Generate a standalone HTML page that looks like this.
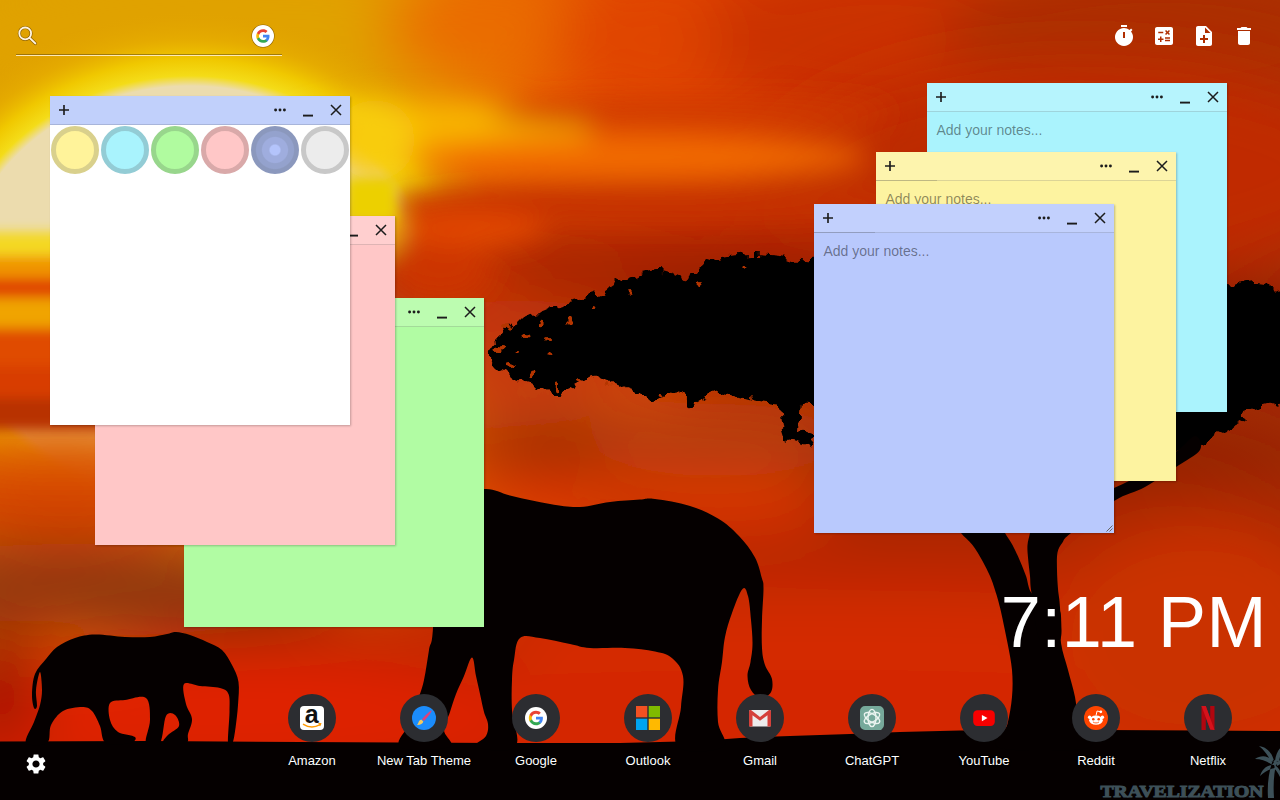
<!DOCTYPE html>
<html>
<head>
<meta charset="utf-8">
<title>New Tab</title>
<style>
*{box-sizing:border-box;margin:0;padding:0}
html,body{width:1280px;height:800px;overflow:hidden;background:#000;font-family:"Liberation Sans",sans-serif}
#bg{position:absolute;left:0;top:0;width:1280px;height:800px;display:block}
.abs{position:absolute}
/* search */
#search{position:absolute;left:16px;top:16px;width:266px;height:40px;border-bottom:1px solid rgba(255,236,190,.95);box-shadow:0 -1px 0 rgba(90,70,20,.5) inset}
/* toolbar */
.tb{position:absolute;top:24px;width:24px;height:24px;fill:#fff}
/* notes */
.note{position:absolute;width:300px;height:329px;box-shadow:1px 1px 2px rgba(0,0,0,.24)}
.note .hd{position:absolute;left:0;top:0;right:0;height:29px;border-bottom:1px solid rgba(0,0,0,.13);background:rgba(255,255,255,.14)}
.note .ttl{position:absolute;left:0;top:28px;width:61px;height:1px;background:rgba(0,0,0,.13)}
.note svg.ic{position:absolute;left:0;top:0;width:300px;height:28px}
.note .ph{position:absolute;left:9.5px;top:39px;font-size:14px;line-height:16px;color:rgba(0,0,0,.45);white-space:nowrap}
.sw{position:absolute;top:30px;width:48px;height:48px;border-radius:50%;border:5px solid #000}
/* dock */
.tile{position:absolute;top:694px;width:48px;height:48px;border-radius:50%;background:#2c2d31}
.tile svg{position:absolute;left:12px;top:12px;width:24px;height:24px}
.lbl{position:absolute;top:753px;width:112px;text-align:center;color:#fff;font-size:13px;line-height:16px;text-shadow:0 0 2px rgba(0,0,0,.9),0 1px 2px rgba(0,0,0,.8)}
#clock{position:absolute;right:13px;top:581.5px;color:#fff;font-size:72px;letter-spacing:.5px;line-height:80px;white-space:nowrap}
</style>
</head>
<body>
<svg id="bg" viewBox="0 0 1280 800">
<defs>
<linearGradient id="gTop" x1="0" x2="1" y1="0" y2="0">
<stop offset="0" stop-color="#dea000"/><stop offset=".2" stop-color="#e4a200"/><stop offset=".32" stop-color="#ea8600"/><stop offset=".42" stop-color="#e65c00"/><stop offset=".55" stop-color="#dc3c00"/><stop offset=".7" stop-color="#c83000"/><stop offset="1" stop-color="#a82c06"/>
</linearGradient>
<filter id="b30" x="-20%" y="-20%" width="140%" height="140%"><feGaussianBlur stdDeviation="30"/></filter>
<filter id="b14" x="-20%" y="-20%" width="140%" height="140%"><feGaussianBlur stdDeviation="14"/></filter>
<filter id="b6" x="-20%" y="-20%" width="140%" height="140%"><feGaussianBlur stdDeviation="6"/></filter>
<filter id="rough" x="-5%" y="-10%" width="110%" height="120%"><feTurbulence type="fractalNoise" baseFrequency="0.09" numOctaves="2" seed="4" result="n"/><feDisplacementMap in="SourceGraphic" in2="n" scale="16" xChannelSelector="R" yChannelSelector="G"/></filter>
<radialGradient id="gSun" gradientUnits="userSpaceOnUse" cx="190" cy="290" r="340" gradientTransform="translate(190 0) scale(1.13 1) translate(-190 0)"><stop offset="0" stop-color="#ecdcae"/><stop offset=".6" stop-color="#ecdcae"/><stop offset=".63" stop-color="#f4dc18"/><stop offset=".68" stop-color="#f0c800"/><stop offset=".74" stop-color="#e8b000" stop-opacity=".6"/><stop offset=".83" stop-color="#e0a000" stop-opacity="0"/></radialGradient>
</defs>
<rect width="1280" height="800" fill="url(#gTop)"/>
<!--BGPATCHES--><g filter="url(#b30)">
<ellipse cx="250" cy="40" rx="330" ry="80" fill="#e0a200"/>
<ellipse cx="500" cy="30" rx="120" ry="60" fill="#ea6c00"/>
<ellipse cx="680" cy="40" rx="130" ry="70" fill="#e04400"/>
<ellipse cx="880" cy="40" rx="180" ry="80" fill="#ca3200"/>
<ellipse cx="1160" cy="40" rx="220" ry="80" fill="#ac2e06"/>
</g>
<ellipse cx="190" cy="290" rx="390" ry="340" fill="url(#gSun)"/>
<g filter="url(#b30)">
<ellipse cx="640" cy="740" rx="1000" ry="110" fill="#d42200"/>
<ellipse cx="1080" cy="170" rx="300" ry="110" fill="#c02c00"/>
<ellipse cx="640" cy="250" rx="320" ry="45" fill="#b02200"/>
<ellipse cx="520" cy="250" rx="150" ry="34" fill="#c23000"/>
<ellipse cx="700" cy="300" rx="420" ry="40" fill="#9c2000"/>
<ellipse cx="580" cy="275" rx="300" ry="35" fill="#a42000"/>
<ellipse cx="900" cy="190" rx="160" ry="60" fill="#bc2a00"/>
<ellipse cx="1000" cy="330" rx="400" ry="60" fill="#8c1c00"/>
<ellipse cx="450" cy="300" rx="70" ry="60" fill="#c43000"/>
<ellipse cx="520" cy="350" rx="130" ry="50" fill="#c43808"/>
<ellipse cx="600" cy="435" rx="200" ry="35" fill="#cc4810"/>
<ellipse cx="900" cy="450" rx="450" ry="40" fill="#902400"/>
<ellipse cx="640" cy="500" rx="260" ry="30" fill="#e03a00"/>
<ellipse cx="1000" cy="520" rx="400" ry="40" fill="#a82600"/>
<ellipse cx="720" cy="440" rx="130" ry="36" fill="#b03c0c"/>
<ellipse cx="730" cy="506" rx="110" ry="20" fill="#e23400"/>
<ellipse cx="800" cy="570" rx="600" ry="30" fill="#b82800"/>
<ellipse cx="800" cy="640" rx="600" ry="50" fill="#d42a00"/>
<ellipse cx="800" cy="720" rx="600" ry="50" fill="#d42600"/>
<ellipse cx="1200" cy="640" rx="150" ry="120" fill="#ca3200"/>
<ellipse cx="60" cy="438" rx="160" ry="22" fill="#e47000"/>
<ellipse cx="60" cy="500" rx="200" ry="42" fill="#d44000"/>
<ellipse cx="80" cy="590" rx="270" ry="46" fill="#8e3610"/>
<ellipse cx="330" cy="650" rx="200" ry="25" fill="#b02800"/>
<ellipse cx="25" cy="630" rx="60" ry="10" fill="#c84000"/>
<ellipse cx="200" cy="700" rx="320" ry="50" fill="#e02400"/>
<ellipse cx="0" cy="690" rx="40" ry="60" fill="#a01800"/>
</g>
<g filter="url(#b14)">
<ellipse cx="440" cy="135" rx="150" ry="34" fill="#f8b400"/>
<ellipse cx="375" cy="140" rx="40" ry="40" fill="#f8cc10"/>
<ellipse cx="690" cy="114" rx="200" ry="14" fill="#d03a00"/>
<ellipse cx="640" cy="157" rx="230" ry="21" fill="#f26c00"/>
<ellipse cx="660" cy="204" rx="290" ry="20" fill="#c63200"/>
<ellipse cx="440" cy="270" rx="50" ry="30" fill="#cc3400"/>
<ellipse cx="378" cy="226" rx="20" ry="28" fill="#f4c810"/>
<ellipse cx="470" cy="228" rx="75" ry="17" fill="#e24600"/>
</g><g filter="url(#b6)">
<rect x="346" y="178" width="50" height="44" fill="#ecd000"/>
<rect x="-40" y="232" width="130" height="24" fill="#f4d820"/>
<rect x="-40" y="256" width="140" height="22" fill="#f09400"/>
<rect x="-40" y="278" width="140" height="20" fill="#e04400"/>
<rect x="-40" y="298" width="150" height="30" fill="#f0a400"/>
<rect x="-40" y="328" width="160" height="40" fill="#e04c00"/>
<rect x="-40" y="366" width="170" height="34" fill="#d83c00"/>
<rect x="-40" y="398" width="180" height="32" fill="#b83200"/>
</g><!--/BGPATCHES-->
<!--SILHOUETTES-->
<path fill="#050000" d="M0 741.5L150 741L300 742L500 743L620 743L700 741L740 738L790 736L850 734L900 732L960 730.5L1100 730L1200 730.5L1280 731V800H0Z"/>
<g filter="url(#rough)"><path fill="#050000" d="M490.0 350.0C491.7 346.3 495.7 343.0 500.0 338.0C504.3 333.0 509.3 324.3 516.0 320.0C522.7 315.7 532.7 314.7 540.0 312.0C547.3 309.3 552.5 306.3 560.0 304.0C567.5 301.7 578.3 299.7 585.0 298.0C591.7 296.3 595.5 296.0 600.0 294.0C604.5 292.0 608.0 288.3 612.0 286.0C616.0 283.7 619.3 282.0 624.0 280.0C628.7 278.0 634.0 275.7 640.0 274.0C646.0 272.3 654.2 270.0 660.0 270.0C665.8 270.0 670.3 272.7 675.0 274.0C679.7 275.3 683.8 279.0 688.0 278.0C692.2 277.0 696.0 271.0 700.0 268.0C704.0 265.0 707.0 262.0 712.0 260.0C717.0 258.0 723.3 257.0 730.0 256.0C736.7 255.0 743.7 254.0 752.0 254.0C760.3 254.0 770.0 255.0 780.0 256.0C790.0 257.0 798.7 261.0 812.0 260.0C825.3 259.0 842.0 252.7 860.0 250.0C878.0 247.3 896.7 245.7 920.0 244.0C943.3 242.3 970.0 239.0 1000.0 240.0C1030.0 241.0 1070.0 245.3 1100.0 250.0C1130.0 254.7 1158.7 262.2 1180.0 268.0C1201.3 273.8 1218.0 282.7 1228.0 285.0C1238.0 287.3 1235.7 282.8 1240.0 282.0C1244.3 281.2 1249.3 279.5 1254.0 280.0C1258.7 280.5 1262.8 280.8 1268.0 285.0C1273.2 289.2 1282.2 286.2 1285.0 305.0C1287.8 323.8 1287.8 381.5 1285.0 398.0C1282.2 414.5 1273.2 402.3 1268.0 404.0C1262.8 405.7 1258.3 406.7 1254.0 408.0C1249.7 409.3 1243.2 410.3 1242.0 412.0C1240.8 413.7 1248.0 415.8 1247.0 418.0C1246.0 420.2 1240.2 422.7 1236.0 425.0C1231.8 427.3 1227.2 429.2 1222.0 432.0C1216.8 434.8 1210.3 439.0 1205.0 442.0C1199.7 445.0 1194.7 448.3 1190.0 450.0C1185.3 451.7 1180.3 453.7 1177.0 452.0C1173.7 450.3 1174.5 443.7 1170.0 440.0C1165.5 436.3 1161.7 433.3 1150.0 430.0C1138.3 426.7 1125.0 423.3 1100.0 420.0C1075.0 416.7 1033.3 412.0 1000.0 410.0C966.7 408.0 931.3 409.0 900.0 408.0C868.7 407.0 829.3 404.7 812.0 404.0C794.7 403.3 802.7 404.0 796.0 404.0C789.3 404.0 780.5 405.0 772.0 404.0C763.5 403.0 753.7 400.0 745.0 398.0C736.3 396.0 727.5 391.7 720.0 392.0C712.5 392.3 705.3 397.7 700.0 400.0C694.7 402.3 691.3 407.3 688.0 406.0C684.7 404.7 683.8 393.7 680.0 392.0C676.2 390.3 669.7 394.3 665.0 396.0C660.3 397.7 656.2 402.3 652.0 402.0C647.8 401.7 644.7 396.3 640.0 394.0C635.3 391.7 629.8 390.3 624.0 388.0C618.2 385.7 610.3 382.0 605.0 380.0C599.7 378.0 597.0 375.0 592.0 376.0C587.0 377.0 581.0 383.2 575.0 386.0C569.0 388.8 561.8 392.8 556.0 393.0C550.2 393.2 546.0 389.0 540.0 387.0C534.0 385.0 525.8 383.0 520.0 381.0C514.2 379.0 508.8 376.7 505.0 375.0C501.2 373.3 499.5 373.5 497.0 371.0C494.5 368.5 491.2 363.5 490.0 360.0C488.8 356.5 488.3 353.7 490.0 350.0Z"/>
<path fill="#050000" d="M780 400L786 440L812 446L816 436L798 430L800 400Z"/><ellipse cx="507" cy="329" rx="4" ry="3" fill="#b43606"/><ellipse cx="525" cy="338" rx="3.5" ry="3" fill="#b43606"/><ellipse cx="540" cy="320" rx="3" ry="2.5" fill="#b43606"/><ellipse cx="510" cy="365" rx="4" ry="3" fill="#b43606"/><ellipse cx="531" cy="374" rx="3.5" ry="2.5" fill="#b43606"/><ellipse cx="558" cy="386" rx="3" ry="2.5" fill="#b43606"/><ellipse cx="579" cy="380" rx="3" ry="2" fill="#b43606"/><ellipse cx="570" cy="320" rx="3" ry="2.5" fill="#b43606"/><ellipse cx="594" cy="308" rx="2.5" ry="2" fill="#b43606"/><ellipse cx="609" cy="386" rx="2.5" ry="2" fill="#b43606"/><ellipse cx="552" cy="356" rx="2.5" ry="2" fill="#b43606"/><ellipse cx="498" cy="350" rx="3.5" ry="3" fill="#b43606"/><ellipse cx="518" cy="352" rx="2.5" ry="2" fill="#b43606"/><ellipse cx="545" cy="340" rx="2" ry="2" fill="#b43606"/><ellipse cx="630" cy="294" rx="2.5" ry="2" fill="#b43606"/><ellipse cx="660" cy="396" rx="2.5" ry="2" fill="#b43606"/><ellipse cx="700" cy="284" rx="2.5" ry="2" fill="#b43606"/><ellipse cx="745" cy="268" rx="2.5" ry="2" fill="#b43606"/></g>
<path fill="#050000" d="M940.0 420.0C933.0 433.3 945.7 483.3 948.0 500.0C950.3 516.7 951.8 514.5 954.0 520.0C956.2 525.5 957.9 528.8 961.0 533.0C964.1 537.2 968.9 540.3 972.5 545.0C976.1 549.7 979.6 555.8 982.5 561.0C985.4 566.2 987.9 571.2 990.0 576.0C992.1 580.8 993.3 584.8 995.0 590.0C996.7 595.2 997.9 598.7 1000.0 607.5C1002.1 616.3 1005.5 632.6 1007.5 643.0C1009.5 653.4 1011.2 661.0 1012.0 670.0C1012.8 679.0 1012.8 688.0 1012.0 697.0C1011.2 706.0 1009.5 715.5 1007.5 724.0C1005.5 732.5 986.6 744.0 1000.0 748.0C1013.4 752.0 1074.8 752.0 1088.0 748.0C1101.2 744.0 1081.2 732.5 1079.0 724.0C1076.8 715.5 1076.8 706.0 1075.0 697.0C1073.2 688.0 1070.3 679.0 1068.0 670.0C1065.7 661.0 1062.3 652.8 1061.0 643.0C1059.7 633.2 1062.7 618.2 1060.0 611.0C1057.3 603.8 1049.8 603.0 1045.0 600.0C1040.2 597.0 1034.7 597.0 1031.5 593.0C1028.3 589.0 1027.9 581.3 1026.0 576.0C1024.1 570.7 1022.2 566.2 1020.0 561.0C1017.8 555.8 1015.0 549.7 1012.5 545.0C1010.0 540.3 1007.2 537.2 1005.0 533.0C1002.8 528.8 1000.8 525.5 999.0 520.0C997.2 514.5 995.5 516.7 994.0 500.0C992.5 483.3 999.0 433.3 990.0 420.0C981.0 406.7 947.0 406.7 940.0 420.0Z"/>
<path fill="#050000" d="M1036.0 500.0C1028.8 503.3 1033.0 514.5 1032.0 520.0C1031.0 525.5 1030.8 528.8 1030.0 533.0C1029.2 537.2 1027.8 540.9 1027.5 545.0C1027.2 549.1 1027.6 552.3 1028.0 557.5C1028.4 562.7 1029.4 570.1 1030.0 576.0C1030.6 581.9 1029.8 582.3 1031.5 593.0C1033.2 603.7 1035.2 632.2 1040.0 640.0C1044.8 647.8 1056.7 645.4 1060.0 640.0C1063.3 634.6 1060.3 616.0 1060.0 607.5C1059.7 599.0 1058.5 595.2 1058.0 589.0C1057.5 582.8 1057.1 576.1 1057.0 570.0C1056.9 563.9 1056.6 557.1 1057.5 552.5C1058.4 547.9 1060.2 545.8 1062.5 542.5C1064.8 539.2 1062.4 539.9 1071.0 533.0C1079.6 526.1 1101.7 508.7 1114.0 501.0C1126.3 493.3 1134.7 492.7 1145.0 487.0C1155.3 481.3 1166.8 473.2 1176.0 467.0C1185.2 460.8 1196.8 455.2 1200.0 450.0C1203.2 444.8 1199.0 435.7 1195.0 436.0C1191.0 436.3 1184.3 446.0 1176.0 452.0C1167.7 458.0 1155.3 466.0 1145.0 472.0C1134.7 478.0 1125.7 483.3 1114.0 488.0C1102.3 492.7 1088.0 498.0 1075.0 500.0C1062.0 502.0 1043.2 496.7 1036.0 500.0Z"/>
<path fill="#050000" d="M484.0 489.0C495.4 488.3 499.9 493.2 512.0 496.0C524.1 498.8 537.5 502.0 550.0 504.0C562.5 506.0 569.0 507.4 580.0 507.0C591.0 506.6 599.0 503.4 610.0 502.0C621.0 500.6 631.8 500.1 640.0 499.5C648.2 498.9 645.8 497.8 655.0 499.0C664.2 500.2 678.5 502.4 690.0 506.0C701.5 509.6 709.0 513.0 718.0 518.5C727.0 524.0 732.3 528.9 739.0 536.0C745.7 543.1 750.5 549.3 754.7 557.0C758.9 564.7 760.2 572.2 761.8 578.0C763.4 583.8 763.5 580.8 763.5 588.5C763.5 596.2 762.3 609.1 762.0 620.0C761.7 630.9 761.5 639.8 762.0 648.0C762.5 656.2 763.2 659.3 765.0 665.0C766.8 670.7 771.0 673.9 772.0 679.0C773.0 684.1 772.7 689.6 770.5 693.0C768.3 696.4 763.6 698.0 760.0 697.5C756.4 697.0 753.3 693.9 751.0 690.0C748.7 686.1 747.6 681.1 747.5 676.0C747.4 670.9 749.6 667.9 750.5 662.0C751.4 656.1 752.4 651.7 752.5 644.0C752.6 636.3 751.8 628.8 751.0 620.0C750.2 611.2 749.6 601.7 748.0 596.0C746.4 590.3 745.4 585.9 742.5 589.0C739.6 592.1 735.2 604.2 732.0 613.0C728.8 621.8 726.8 628.0 725.0 637.0C723.2 646.0 723.3 652.3 722.0 662.0C720.7 671.7 718.7 679.0 718.0 690.0C717.3 701.0 717.1 711.5 718.0 722.0C718.9 732.5 730.3 742.4 723.0 747.0C715.7 751.6 685.7 754.3 678.0 747.0C670.3 739.7 680.1 720.0 681.0 707.0C681.9 694.0 684.6 684.9 683.0 676.0C681.4 667.1 677.6 663.0 672.5 658.5C667.4 654.0 663.7 653.4 655.0 651.5C646.3 649.6 636.9 648.6 625.0 648.0C613.1 647.4 600.1 648.7 590.0 648.0C579.9 647.3 579.2 645.8 570.0 644.0C560.8 642.2 549.2 639.1 540.0 638.0C530.8 636.9 524.8 634.0 520.0 638.0C515.2 642.0 515.5 652.3 514.0 660.0C512.5 667.7 512.4 670.8 512.0 680.0C511.6 689.2 511.4 697.7 512.0 710.0C512.5 722.3 521.6 740.2 515.0 747.0C508.4 753.8 481.3 749.0 476.0 747.0C470.7 745.0 483.8 740.2 486.0 736.0C488.2 731.8 488.4 728.4 488.0 724.0C487.6 719.6 485.5 717.5 484.0 712.0C482.5 706.5 481.5 700.6 480.0 694.0C478.5 687.4 477.5 682.7 476.0 676.0C474.5 669.3 474.2 657.5 472.0 657.5C469.8 657.5 466.9 669.3 464.0 676.0C461.1 682.7 458.6 687.4 456.0 694.0C453.4 700.6 452.2 705.4 450.0 712.0C447.8 718.6 444.2 723.6 444.0 730.0C443.8 736.4 457.1 743.9 449.0 747.0C440.9 750.1 406.8 752.0 400.0 747.0C393.2 742.0 408.7 728.6 412.0 720.0C415.3 711.4 415.8 707.3 418.0 700.0C420.2 692.7 422.0 689.2 424.0 680.0C426.0 670.8 427.4 659.5 429.0 650.0C430.6 640.5 431.7 648.2 433.0 628.0C434.3 607.8 432.9 563.5 436.0 540.0C439.1 516.5 441.2 509.4 450.0 500.0C458.8 490.6 472.6 489.7 484.0 489.0Z"/>
<path fill="#050000" d="M46.0 659.0C49.7 654.5 52.2 650.5 57.0 647.0C61.8 643.5 68.7 640.1 75.0 638.0C81.3 635.9 86.7 634.7 95.0 634.5C103.3 634.3 115.8 636.6 125.0 637.0C134.2 637.4 143.0 637.5 150.0 637.0C157.0 636.5 162.7 634.8 167.0 634.0C171.3 633.2 172.2 631.8 176.0 632.0C179.8 632.2 184.8 633.3 190.0 635.0C195.2 636.7 201.7 639.5 207.0 642.0C212.3 644.5 217.8 646.2 222.0 650.0C226.2 653.8 229.2 659.7 232.0 665.0C234.8 670.3 237.5 675.3 238.5 682.0C239.5 688.7 238.5 697.3 238.0 705.0C237.5 712.7 236.4 721.7 235.5 728.0C234.6 734.3 233.8 740.5 232.5 743.0C231.2 745.5 228.5 748.2 228.0 743.0C227.5 737.8 229.4 720.2 229.5 712.0C229.6 703.8 230.1 698.0 228.5 694.0C226.9 690.0 224.8 689.3 220.0 688.0C215.2 686.7 206.0 686.7 200.0 686.0C194.0 685.3 186.3 681.0 184.0 684.0C181.7 687.0 184.7 698.2 186.0 704.0C187.3 709.8 191.7 714.0 192.0 719.0C192.3 724.0 189.0 730.0 188.0 734.0C187.0 738.0 190.0 741.5 186.0 743.0C182.0 744.5 167.0 744.3 164.0 743.0C161.0 741.7 165.5 737.8 168.0 735.0C170.5 732.2 177.8 729.3 179.0 726.0C180.2 722.7 177.2 716.7 175.0 715.0C172.8 713.3 168.5 711.3 166.0 716.0C163.5 720.7 163.3 738.5 160.0 743.0C156.7 747.5 147.7 746.8 146.0 743.0C144.3 739.2 150.0 727.5 150.0 720.0C150.0 712.5 150.2 701.3 146.0 698.0C141.8 694.7 131.0 699.2 125.0 700.0C119.0 700.8 112.5 699.7 110.0 703.0C107.5 706.3 108.7 715.2 110.0 720.0C111.3 724.8 113.8 729.2 118.0 732.0C122.2 734.8 133.0 735.2 135.0 737.0C137.0 738.8 134.8 742.0 130.0 743.0C125.2 744.0 111.0 745.8 106.0 743.0C101.0 740.2 102.3 731.3 100.0 726.0C97.7 720.7 95.0 714.2 92.0 711.0C89.0 707.8 86.8 707.0 82.0 707.0C77.2 707.0 68.2 708.0 63.0 711.0C57.8 714.0 53.7 719.7 51.0 725.0C48.3 730.3 51.2 740.0 47.0 743.0C42.8 746.0 28.2 746.5 26.0 743.0C23.8 739.5 31.7 728.3 34.0 722.0C36.3 715.7 38.7 710.3 40.0 705.0C41.3 699.7 42.0 695.5 42.0 690.0C42.0 684.5 41.0 672.0 40.0 672.0C39.0 672.0 36.5 684.3 36.0 690.0C35.5 695.7 37.3 703.0 37.0 706.0C36.7 709.0 34.8 710.0 34.0 708.0C33.2 706.0 31.8 699.7 32.0 694.0C32.2 688.3 32.7 679.8 35.0 674.0C37.3 668.2 42.3 663.5 46.0 659.0Z"/>
<g fill="#3d5058"><text x="1100.5" y="797" font-family="Liberation Serif" font-weight="bold" font-size="17.5" textLength="163" lengthAdjust="spacingAndGlyphs" stroke="#3d5058" stroke-width="1.1">TRAVELIZATION</text><path d="M1268 798c-1-14 1-28 5-38l4 1c-3 10-4 23-3 37zM1274 762c-6-7-13-7-19-3 6 0 12 2 17 6zM1274 761c-2-9-8-14-15-15 5 4 9 9 12 16zM1275 761c1-8 4-13 9-16-2 5-4 10-5 17zM1276 763c4-4 8-4 12-2-4 1-8 3-11 5zM1274 765c-8 0-12 5-14 11 4-4 9-7 15-8zM1276 766c4 3 6 8 5 13-2-4-4-8-7-11z"/></g>
<!--/SILHOUETTES-->
</svg>
<!--UI-->
<div class="note" style="left:184px;top:298px;background:#b1fca3"><div class="hd"></div><div class="ttl"></div><svg class="ic" viewBox="0 0 300 28"><g stroke="#1c1c1c" fill="none"><path d="M9 14H19M14 9V19" stroke-width="1.65"/><path d="M253 19.6H263" stroke-width="1.9"/><path d="M281 9L291 19M291 9L281 19" stroke-width="1.5"/></g><g fill="#1c1c1c"><circle cx="225.6" cy="14" r="1.45"/><circle cx="230" cy="14" r="1.45"/><circle cx="234.4" cy="14" r="1.45"/></g></svg></div>
<div class="note" style="left:95px;top:216px;background:#ffc7c7"><div class="hd"></div><div class="ttl"></div><svg class="ic" viewBox="0 0 300 28"><g stroke="#1c1c1c" fill="none"><path d="M9 14H19M14 9V19" stroke-width="1.65"/><path d="M253 19.6H263" stroke-width="1.9"/><path d="M281 9L291 19M291 9L281 19" stroke-width="1.5"/></g><g fill="#1c1c1c"><circle cx="225.6" cy="14" r="1.45"/><circle cx="230" cy="14" r="1.45"/><circle cx="234.4" cy="14" r="1.45"/></g></svg></div>
<div class="note" style="left:50px;top:96px;background:#ffffff"><div class="hd" style=background:#c1d0fb></div><svg class="ic" viewBox="0 0 300 28"><g stroke="#1c1c1c" fill="none"><path d="M9 14H19M14 9V19" stroke-width="1.65"/><path d="M253 19.6H263" stroke-width="1.9"/><path d="M281 9L291 19M291 9L281 19" stroke-width="1.5"/></g><g fill="#1c1c1c"><circle cx="225.6" cy="14" r="1.45"/><circle cx="230" cy="14" r="1.45"/><circle cx="234.4" cy="14" r="1.45"/></g></svg><div class="sw" style="left:1px;background:#fff39a;border-color:#d9d08c"></div><div class="sw" style="left:51px;background:#a9f3fd;border-color:#93ccd5"></div><div class="sw" style="left:101px;background:#b0fb9f;border-color:#98d68c"></div><div class="sw" style="left:151px;background:#ffc7c7;border-color:#d9a9a9"></div><div class="sw" style="left:201px;border:none;background:radial-gradient(circle closest-side,#b4c4fb 0,#b4c4fb 20%,#9fadde 26%,#9fadde 52%,#94a2cd 57%,#94a2cd 77%,#8b98bd 82%,#8b98bd 100%)"></div><div class="sw" style="left:251px;background:#ececec;border-color:#c8c8c8"></div></div>
<div class="note" style="left:927px;top:83px;background:#aaf3fd"><div class="hd"></div><svg class="ic" viewBox="0 0 300 28"><g stroke="#1c1c1c" fill="none"><path d="M9 14H19M14 9V19" stroke-width="1.65"/><path d="M253 19.6H263" stroke-width="1.9"/><path d="M281 9L291 19M291 9L281 19" stroke-width="1.5"/></g><g fill="#1c1c1c"><circle cx="225.6" cy="14" r="1.45"/><circle cx="230" cy="14" r="1.45"/><circle cx="234.4" cy="14" r="1.45"/></g></svg><div class="ph">Add your notes...</div></div>
<div class="note" style="left:876px;top:152px;background:#fdf3a0"><div class="hd"></div><div class="ttl"></div><svg class="ic" viewBox="0 0 300 28"><g stroke="#1c1c1c" fill="none"><path d="M9 14H19M14 9V19" stroke-width="1.65"/><path d="M253 19.6H263" stroke-width="1.9"/><path d="M281 9L291 19M291 9L281 19" stroke-width="1.5"/></g><g fill="#1c1c1c"><circle cx="225.6" cy="14" r="1.45"/><circle cx="230" cy="14" r="1.45"/><circle cx="234.4" cy="14" r="1.45"/></g></svg><div class="ph">Add your notes...</div></div>
<div class="note" style="left:814px;top:204px;background:#b9c9fd"><div class="hd"></div><div class="ttl"></div><svg class="ic" viewBox="0 0 300 28"><g stroke="#1c1c1c" fill="none"><path d="M9 14H19M14 9V19" stroke-width="1.65"/><path d="M253 19.6H263" stroke-width="1.9"/><path d="M281 9L291 19M291 9L281 19" stroke-width="1.5"/></g><g fill="#1c1c1c"><circle cx="225.6" cy="14" r="1.45"/><circle cx="230" cy="14" r="1.45"/><circle cx="234.4" cy="14" r="1.45"/></g></svg><div class="ph">Add your notes...</div><svg style="position:absolute;right:1px;bottom:1px;width:8px;height:8px" viewBox="0 0 8 8"><path d="M7.5 1.5L1.5 7.5M7.5 4.5L4.5 7.5" stroke="#666" stroke-width="1" fill="none"/></svg></div>
<div id="search"></div>
<svg class="abs" style="left:16px;top:24px;width:24px;height:24px" viewBox="0 0 24 24"><g fill="none" stroke-linecap="round"><circle cx="9.2" cy="9.4" r="5.9" stroke="rgba(80,50,0,.55)" stroke-width="3.2"/><path d="M13.6 13.9L19.3 19.4" stroke="rgba(80,50,0,.55)" stroke-width="3.4"/><circle cx="9.2" cy="9.4" r="5.9" stroke="#fff4e0" stroke-width="1.8"/><path d="M13.6 13.9L19.3 19.4" stroke="#fff4e0" stroke-width="2"/></g></svg>
<svg class="abs" style="left:251px;top:24px;width:24px;height:24px" viewBox="0 0 24 24"><circle cx="12" cy="12" r="11.6" fill="rgba(80,50,0,.55)"/><circle cx="12" cy="12" r="11" fill="#fff"/><g transform="translate(5.2 5.2) scale(.567)"><path fill="#4285F4" d="M23.49 12.27c0-.79-.07-1.54-.19-2.27H12v4.51h6.47c-.29 1.48-1.14 2.73-2.4 3.58v3h3.86c2.26-2.09 3.56-5.17 3.56-8.82z"/><path fill="#34A853" d="M12 24c3.24 0 5.95-1.08 7.93-2.91l-3.86-3c-1.08.72-2.45 1.16-4.07 1.16-3.13 0-5.78-2.11-6.73-4.96H1.29v3.09C3.26 21.3 7.31 24 12 24z"/><path fill="#FBBC05" d="M5.27 14.29c-.25-.72-.38-1.49-.38-2.29s.14-1.57.38-2.29V6.62H1.29C.47 8.24 0 10.06 0 12s.47 3.76 1.29 5.38l3.98-3.09z"/><path fill="#EA4335" d="M12 4.75c1.77 0 3.35.61 4.6 1.8l3.42-3.42C17.95 1.19 15.24 0 12 0 7.31 0 3.26 2.7 1.29 6.62l3.98 3.09c.95-2.85 3.6-4.96 6.73-4.96z"/></g></svg>
<svg class="tb" style="left:1112px" viewBox="0 0 24 24"><path d="M9 1h6v2H9z"/><path d="M19.03 7.39l1.42-1.42c-.43-.51-.9-.99-1.41-1.41l-1.42 1.42A8.96 8.96 0 0 0 12 4a9 9 0 1 0 7.03 3.39zM13 14h-2V8h2v6z"/></svg>
<svg class="tb" style="left:1152px" viewBox="0 0 24 24"><path d="M19 3H5c-1.1 0-2 .9-2 2v14c0 1.1.9 2 2 2h14c1.1 0 2-.9 2-2V5c0-1.1-.9-2-2-2zm-5.97 4.06L14.09 6l1.41 1.41L16.91 6l1.06 1.06-1.41 1.41 1.41 1.41-1.06 1.06-1.41-1.4-1.41 1.41-1.06-1.06 1.41-1.41-1.41-1.42zm-6.78.66h5v1.5h-5v-1.5zM11.5 16h-2v2H8v-2H6v-1.5h2v-2h1.5v2h2V16zm6.500 1.250h-5v-1.500h5v1.500zm0-2.500h-5v-1.500h5v1.500z"/></svg>
<svg class="tb" style="left:1192px" viewBox="0 0 24 24"><path d="M14 2H6c-1.100 0-1.990.900-1.990 2L4 20c0 1.100.890 2 1.990 2H18c1.100 0 2-.900 2-2V8l-6-6zm2 14h-3v3h-2v-3H8v-2h3v-3h2v3h3v2zm-3-7V3.500L18.500 9H13z"/></svg>
<svg class="tb" style="left:1232px" viewBox="0 0 24 24"><path d="M6 19c0 1.100.900 2 2 2h8c1.100 0 2-.900 2-2V7H6v12zM19 4h-3.500l-1-1h-5l-1 1H5v2h14V4z"/></svg>
<svg class="abs" style="left:24px;top:752px;width:24px;height:24px;fill:#fff" viewBox="0 0 24 24"><path d="M19.14 12.94c.04-.3.06-.61.06-.94 0-.32-.02-.64-.07-.94l2.030-1.580c.18-.14.23-.41.12-.61l-1.920-3.320c-.12-.22-.37-.29-.59-.22l-2.390.960c-.5-.38-1.030-.7-1.620-.94l-.36-2.540c-.04-.24-.24-.41-.48-.41h-3.840c-.24 0-.43.17-.47.41l-.36 2.540c-.59.24-1.130.57-1.620.94l-2.390-.96c-.22-.08-.47 0-.59.22L2.740 8.870c-.12.210-.08.470.12.610l2.030 1.580c-.05.3-.09.630-.09.940s.02.640.07.940l-2.030 1.580c-.18.140-.23.410-.12.610l1.920 3.320c.12.220.37.290.59.220l2.390-.96c.5.380 1.030.7 1.620.94l.36 2.540c.05.240.24.410.48.410h3.840c.24 0 .44-.17.470-.41l.36-2.540c.59-.24 1.130-.56 1.620-.94l2.390.96c.22.080.47 0 .59-.22l1.920-3.320c.12-.22.070-.47-.12-.61l-2.010-1.580zM12 15.600c-1.980 0-3.600-1.620-3.600-3.600s1.620-3.600 3.600-3.600 3.600 1.620 3.600 3.600-1.620 3.600-3.600 3.600z"/></svg>
<div class="tile" style="left:288px"><svg viewBox="0 0 24 24"><rect x="0" y="0" width="24" height="24" rx="4" fill="#fff"/><text x="11.6" y="17.2" text-anchor="middle" font-family="Liberation Sans" font-weight="bold" font-size="25" fill="#111">a</text><path d="M3.500 18.300c5 3.200 11.500 3.200 16.500 .3" stroke="#f90" stroke-width="1.500" fill="none" stroke-linecap="round"/><path d="M18.300 17.300l2.500.4-1.100 2.200" fill="none" stroke="#f90" stroke-width="1.100"/></svg></div><div class="lbl" style="left:256px">Amazon</div>
<div class="tile" style="left:400px"><svg viewBox="0 0 24 24"><circle cx="12" cy="12" r="12" fill="#1b8cfb"/><path d="M19.500 4.500c.8.800-4.500 7.500-7.500 10.500l-2-2c3-3 8.700-9.300 9.500-8.500z" fill="#e0407b"/><path d="M9.300 13.600l2 2c-.4 2.400-3.300 3.600-6.300 3.400 1.500-1 1.300-4.600 4.300-5.400z" fill="#f4c95d"/></svg></div><div class="lbl" style="left:368px">New Tab Theme</div>
<div class="tile" style="left:512px"><svg viewBox="0 0 24 24"><circle cx="12" cy="12" r="11" fill="#fff"/><g transform="translate(4.800 4.800) scale(.6)"><path fill="#4285F4" d="M23.49 12.27c0-.79-.07-1.54-.19-2.27H12v4.51h6.47c-.29 1.48-1.14 2.73-2.4 3.58v3h3.86c2.26-2.09 3.56-5.17 3.56-8.82z"/><path fill="#34A853" d="M12 24c3.24 0 5.95-1.08 7.93-2.91l-3.86-3c-1.08.72-2.45 1.16-4.07 1.16-3.13 0-5.78-2.11-6.73-4.96H1.29v3.09C3.26 21.3 7.31 24 12 24z"/><path fill="#FBBC05" d="M5.27 14.29c-.25-.72-.38-1.49-.38-2.29s.14-1.57.38-2.29V6.62H1.29C.47 8.24 0 10.06 0 12s.47 3.76 1.29 5.38l3.98-3.09z"/><path fill="#EA4335" d="M12 4.75c1.77 0 3.35.61 4.6 1.8l3.42-3.42C17.95 1.19 15.24 0 12 0 7.31 0 3.26 2.7 1.29 6.62l3.98 3.09c.95-2.85 3.6-4.96 6.73-4.96z"/></g></svg></div><div class="lbl" style="left:480px">Google</div>
<div class="tile" style="left:624px"><svg viewBox="0 0 24 24"><rect x="0" y="0" width="11.300" height="11.300" fill="#f25022"/><rect x="12.700" y="0" width="11.300" height="11.300" fill="#7fba00"/><rect x="0" y="12.700" width="11.300" height="11.300" fill="#00a4ef"/><rect x="12.700" y="12.700" width="11.300" height="11.300" fill="#ffb900"/></svg></div><div class="lbl" style="left:592px">Outlook</div>
<div class="tile" style="left:736px"><svg viewBox="0 0 24 24"><rect x="1" y="4" width="22" height="16.500" rx="1.500" fill="#ececec"/><path d="M1 5.500v14c0 .6.400 1 1 1h2.500V9.200L12 14.700l7.500-5.500v11.300H22c.6 0 1-.4 1-1v-14c0-.9-.6-1.500-1.500-1.500H21L12 11 3 4h-.5C1.600 4 1 4.600 1 5.500z" fill="#d5403a"/></svg></div><div class="lbl" style="left:704px">Gmail</div>
<div class="tile" style="left:848px"><svg viewBox="0 0 24 24"><path d="M5 0h14a5 5 0 0 1 5 5v14a5 5 0 0 1-2 4l-1 1H5a5 5 0 0 1-5-5V5a5 5 0 0 1 5-5z" fill="#76a99b"/><g fill="none" stroke="#eaf4f0" stroke-width="1.400"><ellipse cx="12" cy="12" rx="4" ry="8.600"/><ellipse cx="12" cy="12" rx="4" ry="8.600" transform="rotate(60 12 12)"/><ellipse cx="12" cy="12" rx="4" ry="8.600" transform="rotate(120 12 12)"/></g></svg></div><div class="lbl" style="left:816px">ChatGPT</div>
<div class="tile" style="left:960px"><svg viewBox="0 0 24 24"><rect x="1.200" y="4.300" width="21.600" height="15.600" rx="4.200" fill="#f70000"/><path d="M9.900 8.900v6.400l5.600-3.200z" fill="#fff"/></svg></div><div class="lbl" style="left:928px">YouTube</div>
<div class="tile" style="left:1072px"><svg viewBox="0 0 24 24"><circle cx="12" cy="12" r="12" fill="#ff4500"/><ellipse cx="12" cy="14.200" rx="6.800" ry="4.600" fill="#fff"/><circle cx="5.600" cy="11.300" r="1.700" fill="#fff"/><circle cx="18.400" cy="11.300" r="1.700" fill="#fff"/><circle cx="16.800" cy="5.800" r="1.400" fill="#fff"/><path d="M12 9.600l1.100-4.600 3.500.8" stroke="#fff" stroke-width="1" fill="none"/><circle cx="9.300" cy="13.300" r="1.300" fill="#ff4500"/><circle cx="14.700" cy="13.300" r="1.300" fill="#ff4500"/><path d="M9.300 16.200c1.500 1.100 3.900 1.100 5.400 0" stroke="#ff4500" stroke-width=".8" fill="none" stroke-linecap="round"/></svg></div><div class="lbl" style="left:1040px">Reddit</div>
<div class="tile" style="left:1184px"><svg viewBox="0 0 24 24"><path d="M5.500 0h4.300l4.400 12.500V0h4.300v24c-1.400-.2-2.800-.3-4.300-.4L9.800 11.200V24c-1.400.1-2.900.3-4.300.5z" fill="#b1060f"/><path d="M5.500 0h4.300l8.700 24c-1.400-.2-2.800-.3-4.300-.4z" fill="#d4121b"/></svg></div><div class="lbl" style="left:1152px">Netflix</div>
<div id="clock">7:11 PM</div>
<!--/UI-->
</body>
</html>
